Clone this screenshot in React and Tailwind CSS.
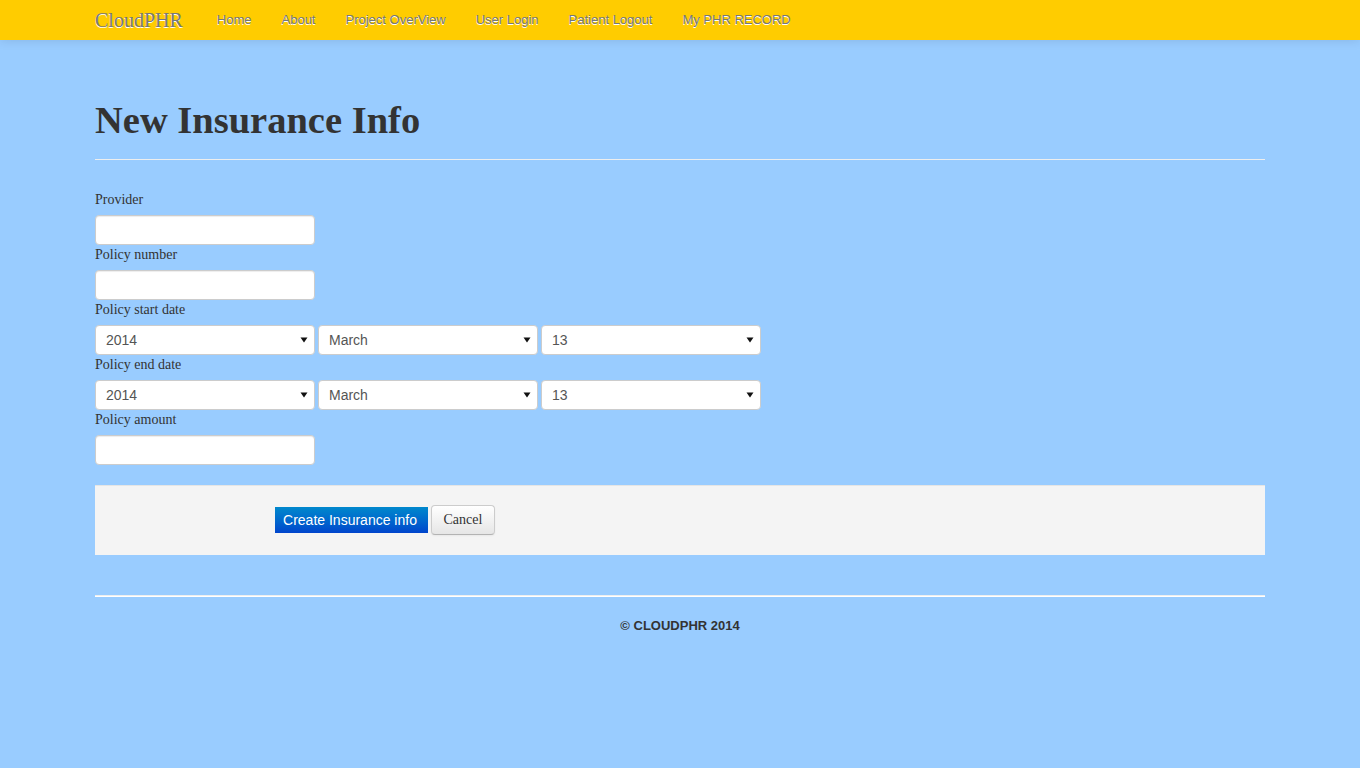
import React from "react";

const navLinks = ["Home", "About", "Project OverView", "User Login", "Patient Logout", "My PHR RECORD"];

function Caret() {
  return (
    <svg width="8" height="6" viewBox="0 0 8 6" className="shrink-0">
      <path d="M0.5 0.5 L7.5 0.5 L4 5.5 Z" fill="#111" />
    </svg>
  );
}

function FakeSelect({ value }) {
  return (
    <div className="w-[220px] h-[30px] bg-white border border-[#cccccc] rounded-[4px] flex items-center justify-between pl-[10px] pr-[6px] font-['Liberation_Sans',Arial,sans-serif] text-[14px] text-[#555]">
      <span>{value}</span>
      <Caret />
    </div>
  );
}

function TextInput() {
  return (
    <div className="w-[220px] h-[30px] bg-white border border-[#cccccc] rounded-[4px] shadow-[inset_0_1px_1px_rgba(0,0,0,0.075)]" />
  );
}

function Label({ children }) {
  return <div className="block mb-[5px] leading-[20px]">{children}</div>;
}

export default function App() {
  return (
    <div className="min-h-screen bg-[#99ccff] font-['Liberation_Serif','Times_New_Roman',serif] text-[14px] leading-[20px] text-[#333]">
      <nav className="h-10 bg-[#ffcc00] shadow-[0_1px_10px_rgba(0,0,0,0.1)] relative">
        <div className="mx-auto w-[1170px] h-full flex items-center">
          <span className="text-[20px] leading-[20px] text-[#777] [text-shadow:0_1px_0_#fff] pr-[19px]">CloudPHR</span>
          <div className="flex items-center font-['Liberation_Sans',Arial,sans-serif] text-[13px] text-[#777] [text-shadow:0_1px_0_#fff]">
            {navLinks.map((l) => (
              <span key={l} className="px-[15px] leading-[20px] -mt-[1px]">{l}</span>
            ))}
          </div>
        </div>
      </nav>

      <div className="mx-auto w-[1170px] pt-[30px]">
        <div className="mt-[30px] pb-[9px] border-b border-[#eeeeee]">
          <h1 className="mt-0 mb-[10px] text-[38.5px] leading-[40px] font-bold text-[#333]">New Insurance Info</h1>
        </div>

        <div className="mt-[30px]">
          <Label>Provider</Label>
          <TextInput />
          <Label>Policy number</Label>
          <TextInput />
          <Label>Policy start date</Label>
          <div className="flex gap-[3px]">
            <FakeSelect value="2014" />
            <FakeSelect value="March" />
            <FakeSelect value="13" />
          </div>
          <Label>Policy end date</Label>
          <div className="flex gap-[3px]">
            <FakeSelect value="2014" />
            <FakeSelect value="March" />
            <FakeSelect value="13" />
          </div>
          <Label>Policy amount</Label>
          <TextInput />
        </div>

        <div className="mt-[20px] h-[70px] bg-[#f4f4f4] border-t border-[#e5e5e5] pl-[180px] pt-[19px] flex items-start gap-[3px]">
          <div className="mt-[2px] h-[26px] w-[153px] pr-[3px] bg-linear-to-b from-[#0088cc] to-[#0044cc] text-white font-['Liberation_Sans',Arial,sans-serif] text-[14px] flex items-center justify-center">
            Create Insurance info
          </div>
          <div className="h-[30px] px-[11.5px] rounded-[4px] border border-[#cccccc] border-b-[#b3b3b3] bg-linear-to-b from-white to-[#e6e6e6] shadow-[inset_0_1px_0_rgba(255,255,255,0.2),0_1px_2px_rgba(0,0,0,0.05)] flex items-center text-[14px] text-[#333]">
            Cancel
          </div>
        </div>

        <div className="mt-[40px] border-t border-[#eeeeee] border-b border-b-white" />
        <div className="mt-[20px] text-center font-['Liberation_Sans',Arial,sans-serif] font-bold text-[13px] leading-[18px] text-[#333]">
          © CLOUDPHR 2014
        </div>
      </div>
    </div>
  );
}
